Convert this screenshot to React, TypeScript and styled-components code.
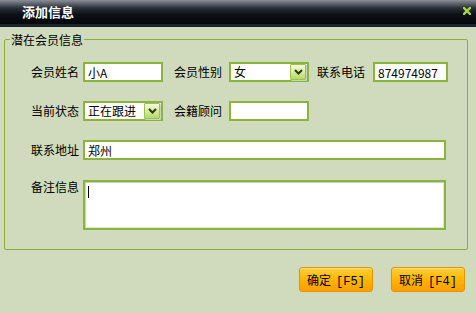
import * as React from "react";
import styled, { createGlobalStyle } from "styled-components";

const GlobalStyle = createGlobalStyle`
  html, body {
    margin: 0;
    padding: 0;
    background: #cfdbbc;
  }
  body {
    font-family: "Noto Sans CJK SC", "DejaVu Sans", sans-serif;
    font-size: 12px;
    color: #000;
  }
`;

const Window = styled.div`
  width: 476px;
  height: 313px;
  background: #cfdbbc;
  display: flex;
  flex-direction: column;
  overflow: hidden;
`;

const TitleBar = styled.div`
  height: 24px;
  flex: none;
  display: flex;
  align-items: center;
  justify-content: space-between;
  padding: 0 5px 0 22px;
  background: linear-gradient(#8a8e95 0, #676c74 3px, #2a3038 8px, #0d1218 14px, #03070b 24px);
  border-bottom: 3px solid #1d232a;
`;

const Title = styled.span`
  color: #fff;
  font-size: 13px;
  font-weight: bold;
  letter-spacing: 0;
  line-height: 24px;
`;

const CloseButton = styled.span`
  width: 8px;
  height: 8px;
  display: flex;
  margin-top: -2px;
`;

const Group = styled.fieldset`
  margin: 4px 8px 0 4px;
  padding: 14px 0 19px 0;
  border: 1px solid #86b135;
  border-radius: 2px;
  min-width: 0;
`;

const Legend = styled.legend`
  margin-left: 5px;
  padding: 0 1px;
  font-size: 12px;
  line-height: 17px;
`;

const Rows = styled.div`
  display: flex;
  flex-direction: column;
  gap: 19px;
  padding-left: 26px;
`;

const Row = styled.div<{ $top?: boolean; $shift?: number }>`
  display: flex;
  align-items: ${(p) => (p.$top ? "flex-start" : "center")};
  margin-top: ${(p) => p.$shift ?? 0}px;
`;

const Label = styled.label<{ $lead?: number; $gap?: number; $top?: boolean }>`
  width: 48px;
  flex: none;
  margin-left: ${(p) => p.$lead ?? 0}px;
  margin-right: ${(p) => p.$gap ?? 4}px;
  white-space: nowrap;
  line-height: ${(p) => (p.$top ? "14px" : "20px")};
`;

const TextInput = styled.input<{ $w: number }>`
  box-sizing: border-box;
  width: ${(p) => p.$w}px;
  height: 20px;
  margin: 0;
  padding: 0 3px;
  border: 2px solid #8ab43b;
  background: #fff;
  font-family: "Noto Sans CJK SC", sans-serif;
  font-size: 12px;
  color: #000;
  outline: none;
`;

const Select = styled.div<{ $w: number }>`
  box-sizing: border-box;
  width: ${(p) => p.$w}px;
  height: 20px;
  border: 2px solid #8ab43b;
  background: #fff;
  display: flex;
  align-items: center;
  justify-content: space-between;
  padding: 0 1px 0 3px;
  line-height: 16px;
`;

const ArrowButton = styled.span`
  box-sizing: border-box;
  width: 16px;
  height: 16px;
  border: 1px solid #9cc350;
  border-radius: 1px;
  background: linear-gradient(#f3fbe0, #d3ea9c 55%, #b4d86a);
  box-shadow: 1px 1px 0 #c9d3bd;
  display: flex;
  align-items: center;
  justify-content: center;
`;

const Memo = styled.div`
  box-sizing: border-box;
  width: 363px;
  height: 50px;
  border: 2px solid #8ab43b;
  box-shadow: inset 1px 1px 0 #c8cfc0, inset -1px -1px 0 #dfe5d8;
  background: #fff;
  padding: 3px 3px;
`;

const Caret = styled.span`
  display: block;
  width: 1px;
  height: 12px;
  margin-top: 1px;
  background: #000;
`;

const Footer = styled.div`
  display: flex;
  justify-content: flex-end;
  gap: 18px;
  padding: 17px 11px 0 0;
`;

const Button = styled.button`
  box-sizing: border-box;
  width: 74px;
  height: 25px;
  margin: 0;
  padding: 0;
  border: 1px solid #e69300;
  border-radius: 3px;
  background: linear-gradient(#ffcf3c, #ffb600 50%, #ff9d00);
  box-shadow: inset 0 1px 0 #ffe07a;
  font-family: "Noto Sans CJK SC", sans-serif;
  font-size: 12px;
  color: #000;
  cursor: pointer;
`;

const Key = styled.span`
  font-family: "Liberation Mono", "DejaVu Sans Mono", monospace;
  font-size: 12px;
  margin-left: 5px;
`;

const Chevron = () => (
  <svg width="9" height="6" viewBox="0 0 9 6">
    <path d="M1 1l3.5 3.5L8 1" fill="none" stroke="#2c3a10" strokeWidth="2" />
  </svg>
);

const CloseIcon = () => (
  <svg width="8" height="8" viewBox="0 0 8 8">
    <path d="M1 1l6 6M7 1L1 7" stroke="#a7d53f" strokeWidth="2.4" strokeLinecap="square" />
  </svg>
);

export default function App() {
  return (
    <Window>
      <GlobalStyle />
      <TitleBar>
        <Title>添加信息</Title>
        <CloseButton>
          <CloseIcon />
        </CloseButton>
      </TitleBar>

      <Group>
        <Legend>潜在会员信息</Legend>
        <Rows>
          <Row>
            <Label>会员姓名</Label>
            <TextInput $w={80} defaultValue="小A" />
            <Label $lead={11} $gap={7}>会员性别</Label>
            <Select $w={80}>
              <span>女</span>
              <ArrowButton>
                <Chevron />
              </ArrowButton>
            </Select>
            <Label $lead={8} $gap={8}>联系电话</Label>
            <TextInput $w={75} defaultValue="874974987" />
          </Row>
          <Row>
            <Label>当前状态</Label>
            <Select $w={80}>
              <span>正在跟进</span>
              <ArrowButton>
                <Chevron />
              </ArrowButton>
            </Select>
            <Label $lead={11} $gap={7}>会籍顾问</Label>
            <TextInput $w={80} defaultValue="" />
          </Row>
          <Row>
            <Label>联系地址</Label>
            <TextInput $w={363} defaultValue="郑州" />
          </Row>
          <Row $top $shift={1}>
            <Label $top>备注信息</Label>
            <Memo>
              <Caret />
            </Memo>
          </Row>
        </Rows>
      </Group>

      <Footer>
        <Button>
          确定<Key>[F5]</Key>
        </Button>
        <Button>
          取消<Key>[F4]</Key>
        </Button>
      </Footer>
    </Window>
  );
}
